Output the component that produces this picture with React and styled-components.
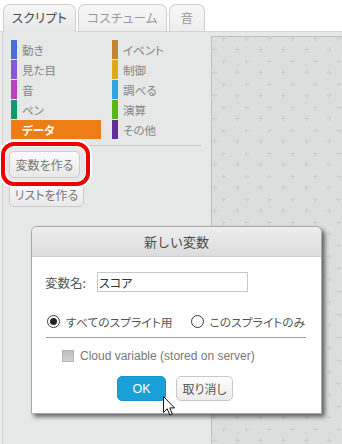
import React from "react";
import styled, { createGlobalStyle } from "styled-components";

const Global = createGlobalStyle`
  html, body { margin: 0; padding: 0; background: #ffffff; }
  body { font-family: "Noto Sans CJK JP", "Liberation Sans", sans-serif; }
  * { box-sizing: border-box; }
`;

const Page = styled.div`
  width: 342px;
  height: 444px;
  position: relative;
  overflow: hidden;
  display: flex;
  flex-direction: column;
  background: #ececec;
`;

const TabBar = styled.div`
  height: 32px;
  display: flex;
  align-items: flex-end;
  gap: 2px;
  padding: 4px 0 0 3px;
  background: #ffffff;
  border-bottom: 1px solid #d3d3d3;
`;

const Tab = styled.div`
  width: ${(p) => p.$w}px;
  height: ${(p) => (p.$active ? 28 : 27)}px;
  margin-bottom: ${(p) => (p.$active ? -1 : 0)}px;
  align-self: flex-start;
  display: flex;
  align-items: center;
  justify-content: center;
  border: 1px solid #cfcfcf;
  border-bottom: none;
  border-radius: 7px 7px 0 0;
  background: ${(p) =>
    p.$active
      ? "linear-gradient(#f6f6f6, #e6e7e7)"
      : "linear-gradient(#f7f7f7, #eeeeee)"};
  color: ${(p) => (p.$active ? "#4a4a4a" : "#9a9a9a")};
  font-size: 12.5px;
  font-feature-settings: "palt";
  letter-spacing: 0.3px;
  padding-bottom: 2px;
`;

const Main = styled.div`
  flex: 1;
  display: flex;
  margin-left: 2px;
  border-left: 1px solid #d3d3d3;
  background: #e6e7e7;
`;

const Palette = styled.div`
  width: 208px;
  display: flex;
  flex-direction: column;
  align-items: flex-start;
  padding: 8px 0 0 6px;
`;

const CategoryGrid = styled.div`
  margin-left: 2px;
  display: grid;
  grid-template-columns: 101px 90px;
  grid-template-rows: repeat(5, 19px);
  grid-auto-flow: column;
  row-gap: 1px;
`;

const Category = styled.div`
  width: 90px;
  height: 19px;
  display: flex;
  align-items: center;
  background: ${(p) => (p.$selected ? "#ee7d16" : "transparent")};
  color: ${(p) => (p.$selected ? "#ffffff" : "#858585")};
  font-weight: ${(p) => (p.$selected ? "bold" : "normal")};
  font-size: 11.5px;
  font-feature-settings: "palt";
  &::before {
    content: "";
    width: 6px;
    height: 19px;
    margin-right: 5px;
    background: ${(p) => p.$color};
  }
`;

const Separator = styled.div`
  width: 190px;
  margin: 6px 0 0 2px;
  height: 1px;
  background: #cbcbcb;
`;

const Highlight = styled.div`
  position: relative;
  margin-top: 5px;
  &::before {
    content: "";
    position: absolute;
    left: -8px;
    right: -10px;
    top: -9px;
    bottom: -8px;
    border: 4px solid #ee0000;
    border-radius: 13px;
    box-shadow: 0 0 0 2px #ffffff, inset 0 0 0 1px #ffffff;
    pointer-events: none;
  }
`;

const PaletteButton = styled.div`
  width: ${(p) => p.$w}px;
  height: ${(p) => p.$h}px;
  margin-top: ${(p) => p.$mt || 0}px;
  display: flex;
  align-items: center;
  justify-content: center;
  border: 1px solid #cdcdcd;
  border-radius: 5px;
  background: linear-gradient(#fbfbfb, #e9e9e9);
  color: #777777;
  font-size: 12px;
  font-feature-settings: "palt";
`;

const ScriptArea = styled.div`
  flex: 1;
  margin-top: 4px;
  position: relative;
  overflow: hidden;
  background: #dcdddd;
  border-top: 1px solid #c0c0c0;
  border-left: 1px solid #bdbdbd;
`;

const GridSvg = styled.svg`
  display: block;
  width: 100%;
  height: 100%;
`;

const Dialog = styled.div`
  position: absolute;
  left: 31px;
  top: 226px;
  width: 291px;
  height: 188px;
  display: flex;
  flex-direction: column;
  background: #ffffff;
  border: 1px solid #a9a9a9;
  border-radius: 6px 6px 0 0;
  box-shadow: 3px 3px 4px rgba(0, 0, 0, 0.55);
`;

const DialogHeader = styled.div`
  height: 30px;
  display: flex;
  align-items: center;
  justify-content: center;
  border-radius: 6px 6px 0 0;
  background: linear-gradient(#eeeeee, #dcdcdc);
  border-bottom: 1px solid #cfcfcf;
  color: #4a4a4a;
  font-size: 13px;
`;

const DialogBody = styled.div`
  flex: 1;
  display: flex;
  flex-direction: column;
  padding: 15px 14px 0 13px;
`;

const NameRow = styled.div`
  display: flex;
  align-items: center;
  height: 20px;
  color: #555555;
  font-size: 12.5px;
`;

const NameInput = styled.div`
  width: 151px;
  height: 20px;
  margin-left: 11px;
  border: 1px solid #c8c8c8;
  display: flex;
  align-items: center;
  padding-left: 1px;
  color: #333333;
  font-size: 12px;
  font-feature-settings: "palt";
`;

const RadioRow = styled.div`
  display: flex;
  align-items: center;
  height: 14px;
  margin-top: 22px;
  padding-left: 2px;
  color: #555555;
  font-size: 11.8px;
  font-feature-settings: "palt";
`;

const RadioOption = styled.div`
  display: flex;
  align-items: center;
  gap: 6px;
  margin-right: ${(p) => p.$mr || 0}px;
`;

const Radio = styled.span`
  width: 13px;
  height: 13px;
  border-radius: 50%;
  border: 1px solid #3c3c3c;
  background: #ffffff;
  display: flex;
  align-items: center;
  justify-content: center;
  &::after {
    content: "";
    width: 7px;
    height: 7px;
    border-radius: 50%;
    background: ${(p) => (p.$checked ? "#222222" : "transparent")};
  }
`;

const Rule = styled.div`
  height: 1px;
  margin: 9px 1px 0 1px;
  background: #a0a0a0;
`;

const CheckRow = styled.div`
  display: flex;
  align-items: center;
  gap: 6px;
  margin-top: 11px;
  padding-left: 17px;
  color: #777777;
  font-family: "Liberation Sans", Arial, sans-serif;
  font-size: 12px;
`;

const CheckBox = styled.span`
  width: 12px;
  height: 12px;
  border: 1px solid #b5b5b5;
  background: linear-gradient(#bdbdbd, #d4d4d4);
`;

const ButtonRow = styled.div`
  display: flex;
  justify-content: center;
  gap: 10px;
  margin-top: 13px;
  padding-right: 2px;
  position: relative;
`;

const DialogButton = styled.div`
  width: ${(p) => p.$w}px;
  height: 25px;
  display: flex;
  align-items: center;
  justify-content: center;
  border-radius: 5px;
  font-size: 12px;
  font-feature-settings: "palt";
  ${(p) =>
    p.$primary
      ? `
    background: #1aa0d8;
    border: 1px solid #1793c7;
    color: #ffffff;
    font-family: "Liberation Sans", Arial, sans-serif;
    font-size: 12.5px;
  `
      : `
    background: linear-gradient(#fdfdfd, #ececec);
    border: 1px solid #c9c9c9;
    color: #555555;
  `}
`;

const Cursor = styled.svg`
  position: absolute;
  left: 118px;
  top: 20px;
`;

const left = [
  { name: "動き", color: "#4a6cd4" },
  { name: "見た目", color: "#8a55d7" },
  { name: "音", color: "#bb42c3" },
  { name: "ペン", color: "#0e9a6c" },
  { name: "データ", color: "#ee7d16", selected: true },
];
const right = [
  { name: "イベント", color: "#c88330" },
  { name: "制御", color: "#e1a91a" },
  { name: "調べる", color: "#2ca5e2" },
  { name: "演算", color: "#5cb712" },
  { name: "その他", color: "#632d99" },
];

export default function App() {
  return (
    <>
      <Global />
      <Page>
        <TabBar>
          <Tab $active $w={73}>スクリプト</Tab>
          <Tab $w={89}>コスチューム</Tab>
          <Tab $w={36}>音</Tab>
        </TabBar>
        <Main>
          <Palette>
            <CategoryGrid>
              {[...left, ...right].map((c) => (
                <Category key={c.name} $color={c.color} $selected={c.selected}>
                  {c.name}
                </Category>
              ))}
            </CategoryGrid>
            <Separator />
            <Highlight>
              <PaletteButton $w={71} $h={27}>変数を作る</PaletteButton>
            </Highlight>
            <PaletteButton $w={75} $h={25} $mt={4}>リストを作る</PaletteButton>
          </Palette>
          <ScriptArea>
            <GridSvg>
              <defs>
                <pattern id="plus" width="23" height="23" patternUnits="userSpaceOnUse">
                  <g stroke="#cdcece" strokeWidth="1">
                    <line x1="9" y1="1.5" x2="14" y2="1.5" />
                    <line x1="11.5" y1="-1" x2="11.5" y2="4" />
                    <line x1="0" y1="12.5" x2="5" y2="12.5" />
                    <line x1="2.5" y1="10" x2="2.5" y2="15" />
                  </g>
                </pattern>
              </defs>
              <rect width="100%" height="100%" fill="url(#plus)" />
            </GridSvg>
          </ScriptArea>
        </Main>
        <Dialog>
          <DialogHeader>新しい変数</DialogHeader>
          <DialogBody>
            <NameRow>
              変数名:
              <NameInput>スコア</NameInput>
            </NameRow>
            <RadioRow>
              <RadioOption $mr={18}>
                <Radio $checked />
                すべてのスプライト用
              </RadioOption>
              <RadioOption>
                <Radio />
                このスプライトのみ
              </RadioOption>
            </RadioRow>
            <Rule />
            <CheckRow>
              <CheckBox />
              Cloud variable (stored on server)
            </CheckRow>
            <ButtonRow>
              <DialogButton $primary $w={49}>OK</DialogButton>
              <DialogButton $w={57}>取り消し</DialogButton>
              <Cursor width="13" height="21" viewBox="0 0 13 21">
                <path
                  d="M0.5 0.5 L0.5 16.5 L4.2 12.8 L6.8 19 L9.3 18 L6.8 11.9 L11.5 11.9 Z"
                  fill="#ffffff"
                  stroke="#111111"
                  strokeWidth="1"
                  strokeLinejoin="miter"
                />
              </Cursor>
            </ButtonRow>
          </DialogBody>
        </Dialog>
      </Page>
    </>
  );
}
